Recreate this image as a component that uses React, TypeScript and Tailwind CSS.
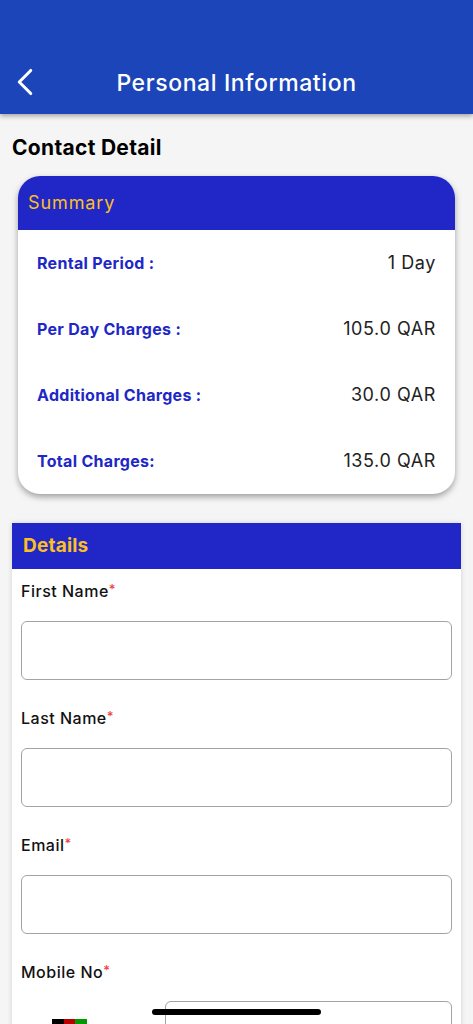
import { ChevronLeft } from 'lucide-react';

const rows = [
    { label: 'Rental Period :', value: '1 Day' },
    { label: 'Per Day Charges :', value: '105.0 QAR' },
    { label: 'Additional Charges :', value: '30.0 QAR' },
    { label: 'Total Charges:', value: '135.0 QAR' },
];

function Label({ text }: { text: string }) {
    return (
        <div className="h-[20px] text-[16px] leading-[20px] font-medium text-[#111] tracking-[0.5px]">
            {text}
            <span className="text-[#f04040] text-[13px] align-[3px]">*</span>
        </div>
    );
}

function Field({ text }: { text: string }) {
    return (
        <div className="mb-[26px]">
            <Label text={text} />
            <div className="mt-[22px] h-[59px] rounded-[6px] border border-[#a3a3a3] bg-white" />
        </div>
    );
}

export default function App() {
    return (
        <div className="relative h-[1024px] overflow-hidden bg-[#f5f5f5] font-['Inter',sans-serif]">
            <header className="relative flex h-[114px] items-end bg-[#1b45b8] pb-[9px] shadow-[0_2px_5px_rgba(0,0,0,0.35)]">
                <ChevronLeft className="ml-[2px] h-[46px] w-[46px] text-white" strokeWidth={1.6} />
                <h1 className="absolute left-0 right-0 bottom-[16px] text-center text-[23px] leading-[30px] font-medium text-white tracking-[0.6px]">
                    Personal Information
                </h1>
            </header>

            <h2 className="ml-[12px] mt-[21px] text-[21px] leading-[26px] font-bold text-black tracking-[0.3px]">Contact Detail</h2>

            <section className="mx-[18px] mt-[15px] h-[318px] overflow-hidden rounded-[22px] bg-white shadow-[0_3px_6px_rgba(0,0,0,0.35)]">
                <div className="flex h-[54px] items-center bg-[#2027c6] pb-[2px] pl-[10px] text-[18px] text-[#fbbf24] tracking-[0.9px]">
                    Summary
                </div>
                <div className="px-[19px]">
                    {rows.map((row) => (
                        <div key={row.label} className="flex h-[66px] items-center justify-between">
                            <span className="text-[16px] font-bold text-[#2027c6] tracking-[0.3px]">{row.label}</span>
                            <span className="-mt-[2px] text-[18px] text-[#222] tracking-[0.6px]">{row.value}</span>
                        </div>
                    ))}
                </div>
            </section>

            <section className="mx-[12px] mt-[29px] bg-white shadow-[0_0_5px_rgba(0,0,0,0.15)]">
                <div className="flex h-[46px] items-center bg-[#2027c6] pl-[11px] text-[19px] font-bold text-[#fbbf24] tracking-[0.2px]">
                    Details
                </div>
                <div className="px-[9px] pt-[10px]">
                    <Field text="First Name" />
                    <Field text="Last Name" />
                    <Field text="Email" />
                    <Label text="Mobile No" />
                    <div className="mt-[21px] flex">
                        <div className="ml-[31px] mt-[18px] flex h-[24px] w-[35px] shrink-0">
                            <div className="flex-1 bg-black" />
                            <div className="flex-1 bg-[#b80000]" />
                            <div className="flex-1 bg-[#009a00]" />
                        </div>
                        <div className="ml-[78px] h-[59px] flex-1 rounded-[6px] border border-[#a3a3a3] bg-white" />
                    </div>
                </div>
            </section>

            <div className="absolute left-[152px] top-[1009px] h-[6px] w-[169px] rounded-full bg-black" />
        </div>
    );
}
